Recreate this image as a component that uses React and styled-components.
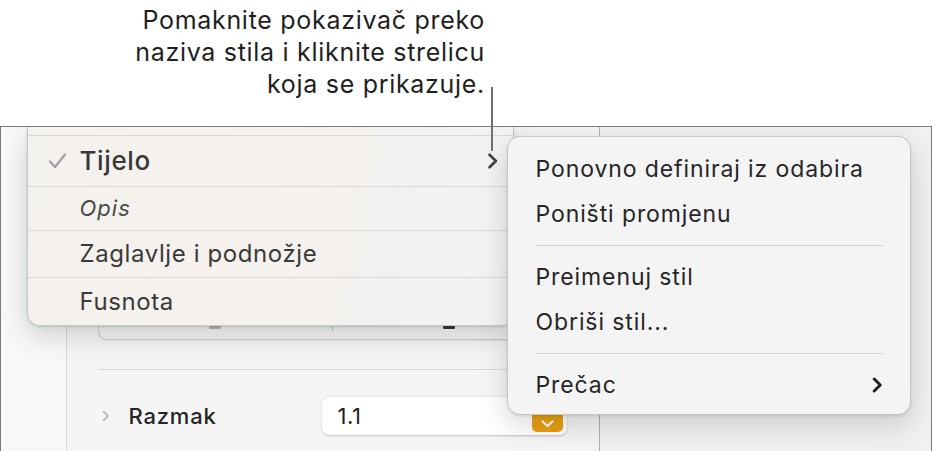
import React from 'react';
import styled, { createGlobalStyle } from 'styled-components';

const Global = createGlobalStyle`
  html, body { margin: 0; padding: 0; background: #fff; }
  body { font-family: Inter, "Noto Sans", sans-serif; -webkit-font-smoothing: antialiased; }
`;

const Page = styled.div`
  position: relative;
  width: 935px;
  height: 451px;
  overflow: hidden;
  display: flex;
  flex-direction: column;
  background: #fff;
`;

const Callout = styled.div`
  height: 126px;
  flex: none;
`;

const CalloutText = styled.p`
  margin: 0;
  width: 485px;
  padding-top: 4px;
  text-align: right;
  font-size: 25px;
  letter-spacing: 0.7px;
  line-height: 32px;
  color: #1f1f1f;
`;

const Leader = styled.div`
  position: absolute;
  left: 491px;
  top: 87px;
  width: 1.5px;
  height: 64px;
  background: #707070;
  z-index: 10;
`;

const Window = styled.div`
  position: relative;
  flex: 1;
  margin-right: 3px;
  border: 1.5px solid #7b7b7b;
  border-bottom: none;
  display: grid;
  grid-template-columns: 64.5px 534px 1fr;
  overflow: hidden;
`;

const LeftStrip = styled.div`
  background: #f8f8f8;
`;

const Panel = styled.div`
  background: #f5f5f5;
  border-left: 1px solid #d6d6d6;
  border-right: 1px solid #b0b0b0;
  padding: 0 32px 0 31px;
  display: flex;
  flex-direction: column;
`;

const RightArea = styled.div`
  background: #f1f1f1;
`;

const Stepper = styled.div`
  margin-top: 161.5px;
  height: 50px;
  border: 1px solid #cdcdcd;
  border-top: none;
  border-radius: 0 0 9px 9px;
  display: grid;
  grid-template-columns: 1fr 1px 1fr;
  box-shadow: 0 1px 1px rgba(0,0,0,0.06);
`;

const Segment = styled.div`
  display: flex;
  justify-content: center;
  align-items: flex-end;
  padding-bottom: 10px;
`;

const Dash = styled.div`
  width: 12px;
  height: 2.5px;
  border-radius: 1px;
  background: ${p => (p.$dim ? '#b9b9b9' : '#3a3a3a')};
`;

const SegDivider = styled.div`
  background: #c4c4c4;
  margin-bottom: 8px;
`;

const Rule = styled.div`
  margin-top: 29px;
  height: 1px;
  background: #d9d9d9;
`;

const FieldRow = styled.div`
  margin-top: 27px;
  display: grid;
  grid-template-columns: 224px 1fr;
  align-items: center;
`;

const Disclosure = styled.div`
  display: flex;
  align-items: center;
  gap: 19px;
  padding-left: 4px;
  font-size: 22px;
  letter-spacing: 0.8px;
  font-weight: 500;
  color: #262626;
`;

const Input = styled.div`
  height: 38px;
  background: #fff;
  border-radius: 7px;
  box-shadow: 0 0.5px 2px rgba(0,0,0,0.22);
  display: flex;
  align-items: center;
  padding: 0 4px 0 16px;
  font-size: 22px;
  letter-spacing: 0.6px;
  color: #222;
`;

const OrangeBtn = styled.div`
  margin-left: auto;
  align-self: flex-end;
  margin-bottom: 3px;
  width: 31px;
  height: 22px;
  border-radius: 5px;
  background: #e9a112;
  display: flex;
  align-items: flex-end;
  justify-content: center;
  padding-bottom: 4px;
  box-sizing: border-box;
`;

const StyleMenu = styled.div`
  position: absolute;
  left: 25.5px;
  top: 0;
  width: 485px;
  z-index: 3;
  background: linear-gradient(100deg, #f4f2ef 0%, #f6f1ec 40%, #f3f1ef 70%, #f3f3f2 100%);
  border: 0.5px solid #c8c8c8;
  border-top: none;
  border-radius: 0 0 13px 13px;
  box-shadow: 0 10px 28px rgba(0,0,0,0.16), 0 1px 3px rgba(0,0,0,0.12);
  overflow: hidden;
`;

const MenuRow = styled.div`
  height: ${p => p.$h}px;
  border-top: ${p => (p.$first ? 'none' : '1px solid #dcd9d5')};
  display: flex;
  align-items: center;
  position: relative;
  padding-left: 52px;
  padding-right: 14px;
  font-size: ${p => p.$size || 24}px;
  letter-spacing: ${p => p.$ls ?? 0.6}px;
  font-weight: ${p => p.$weight || 400};
  font-style: ${p => (p.$italic ? 'italic' : 'normal')};
  color: ${p => p.$color || '#333'};
`;

const Check = styled.svg`
  position: absolute;
  left: 20px;
  top: 50%;
  transform: translateY(-50%);
`;

const RowChevron = styled.svg`
  margin-left: auto;
`;

const SubMenu = styled.div`
  position: absolute;
  left: 505.5px;
  top: 8.5px;
  width: 404px;
  height: 279px;
  box-sizing: border-box;
  z-index: 4;
  background: #f4f4f4;
  border: 0.5px solid #c6c6c6;
  border-radius: 13px;
  box-shadow: 0 10px 30px rgba(0,0,0,0.16), 0 1px 3px rgba(0,0,0,0.1);
  padding: 10px 27px 0 28px;
  display: flex;
  flex-direction: column;
`;

const SubItem = styled.div`
  height: 45px;
  display: flex;
  align-items: center;
  font-size: 23px;
  letter-spacing: 0.9px;
  color: #262626;
`;

const SubSep = styled.div`
  height: 18px;
  display: flex;
  align-items: center;
  &::after {
    content: '';
    flex: 1;
    height: 1px;
    background: #d6d6d6;
  }
`;

const Chevron = ({ color = '#333', w = 10, h = 14, sw = 2.4 }) => (
  <svg width={w} height={h} viewBox="0 0 10 14" fill="none">
    <path d="M2 1.5 L7.5 7 L2 12.5" stroke={color} strokeWidth={sw} strokeLinecap="round" strokeLinejoin="round" />
  </svg>
);

export default function App() {
  return (
    <Page>
      <Global />
      <Callout>
        <CalloutText>
          Pomaknite pokazivač preko
          <br />
          naziva stila i kliknite strelicu
          <br />
          koja se prikazuje.
        </CalloutText>
      </Callout>
      <Leader />
      <Window>
        <LeftStrip />
        <Panel>
          <Stepper>
            <Segment><Dash $dim /></Segment>
            <SegDivider />
            <Segment><Dash /></Segment>
          </Stepper>
          <Rule />
          <FieldRow>
            <Disclosure>
              <Chevron color="#a9a9a9" w={8} h={12} sw={1.8} />
              Razmak
            </Disclosure>
            <Input>
              1.1
              <OrangeBtn>
                <svg width="13" height="8" viewBox="0 0 13 8" fill="none">
                  <path d="M1.5 1.5 L6.5 6 L11.5 1.5" stroke="#fff" strokeWidth="2.2" strokeLinecap="round" strokeLinejoin="round" />
                </svg>
              </OrangeBtn>
            </Input>
          </FieldRow>
        </Panel>
        <RightArea />

        <StyleMenu>
          <MenuRow $first $h={7.5} />
          <MenuRow $h={50} $size={26} $weight={500} $color="#383838">
            <Check width="19" height="16" viewBox="0 0 19 16" fill="none">
              <path d="M2 8.5 L7 14 L17 1.5" stroke="#a3a3a3" strokeWidth="2.4" strokeLinecap="round" strokeLinejoin="round" />
            </Check>
            Tijelo
            <RowChevron width="12" height="16" viewBox="0 0 10 14" fill="none">
              <path d="M2 1.5 L7.5 7 L2 12.5" stroke="#454545" strokeWidth="2.4" strokeLinecap="round" strokeLinejoin="round" />
            </RowChevron>
          </MenuRow>
          <MenuRow $h={43} $size={22} $ls={1} $italic $color="#4a4a4a">Opis</MenuRow>
          <MenuRow $h={46} $color="#3a3a3a">Zaglavlje i podnožje</MenuRow>
          <MenuRow $h={47} $color="#3a3a3a">Fusnota</MenuRow>
        </StyleMenu>

        <SubMenu>
          <SubItem>Ponovno definiraj iz odabira</SubItem>
          <SubItem>Poništi promjenu</SubItem>
          <SubSep />
          <SubItem>Preimenuj stil</SubItem>
          <SubItem>Obriši stil...</SubItem>
          <SubSep />
          <SubItem>
            Prečac
            <RowChevron width="11" height="16" viewBox="0 0 10 14" fill="none">
              <path d="M2 1.5 L7.5 7 L2 12.5" stroke="#1e1e1e" strokeWidth="2.6" strokeLinecap="round" strokeLinejoin="round" />
            </RowChevron>
          </SubItem>
        </SubMenu>
      </Window>
    </Page>
  );
}
